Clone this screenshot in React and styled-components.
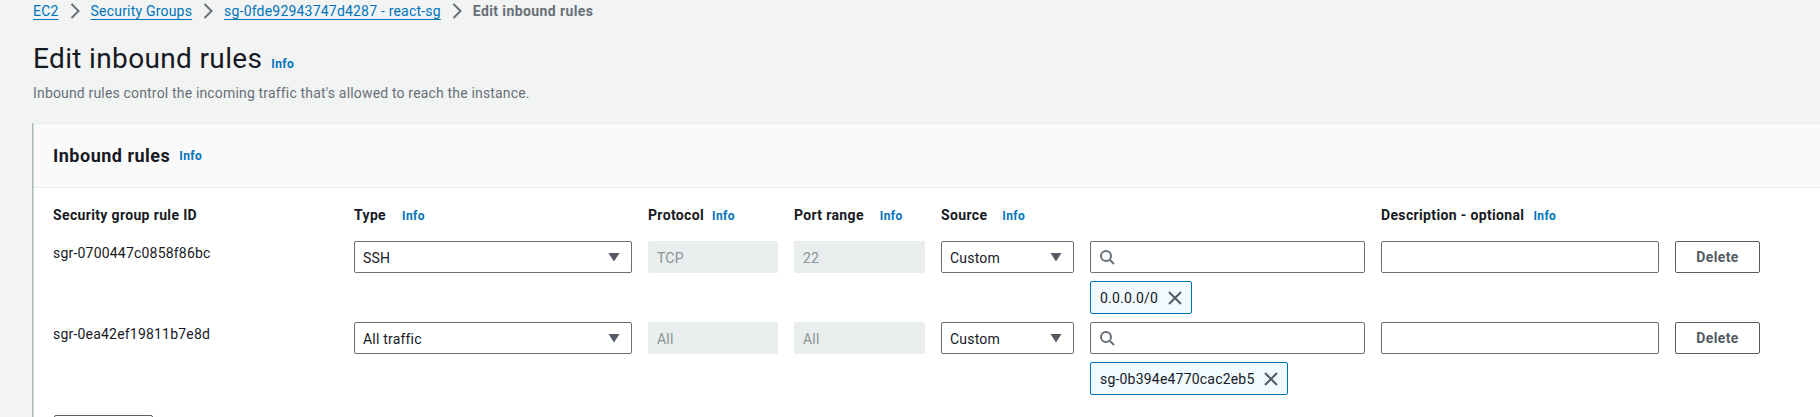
import React from 'react';
import styled, { createGlobalStyle } from 'styled-components';

const GlobalStyle = createGlobalStyle`
  html, body {
    margin: 0;
    height: 417px;
    overflow: hidden;
    background: #f2f3f3;
    font-family: Roboto, "Noto Sans", sans-serif;
    letter-spacing: 0.2px;
    color: #16191f;
  }
`

const Page = styled.div`
  padding: 0 0 0 33px;
`
const Crumbs = styled.nav`
  display: flex;
  align-items: center;
  height: 21px;
  font-size: 14px;
`
const CrumbLink = styled.a`
  color: #0073bb;
  text-decoration: underline;
  text-underline-offset: 3px;
`
const CrumbCurrent = styled.span`
  color: #687078;
  font-weight: 700;
  letter-spacing: 0.4px;
`
const Chevron = styled.svg`
  width: 16px;
  height: 16px;
  margin: 0 8px;
  fill: none;
  stroke: #687078;
  stroke-width: 2;
`
const TitleRow = styled.div`
  display: flex;
  align-items: baseline;
  gap: 9px;
  margin-top: 20px;
`
const Title = styled.h1`
  margin: 0;
  font-size: 28px;
  line-height: 36px;
  font-weight: 400;
  letter-spacing: 0.35px;
`
const Info = styled.a`
  color: #0073bb;
  font-size: 12px;
  font-weight: 700;
  letter-spacing: 0.4px;
  margin-left: ${p => p.$gap || 0}px;
`
const Sub = styled.p`
  margin: 6px 0 0;
  font-size: 14px;
  line-height: 20px;
  letter-spacing: 0.17px;
  color: #687078;
`
const Card = styled.section`
  margin-top: 20px;
  background: #fff;
  border-left: 1px solid #d5dbdb;
  box-shadow: -1px 0 0 #aab7b8;
  height: 294px;
  overflow: hidden;
`
const CardHead = styled.header`
  display: flex;
  align-items: center;
  gap: 9px;
  height: 63px;
  padding-left: 19px;
  background: #fafafa;
  border-top: 1px solid #eaeded;
  border-bottom: 1px solid #eaeded;
`
const CardTitle = styled.h2`
  margin: 0;
  font-size: 18px;
  font-weight: 700;
  letter-spacing: 0.5px;
`
const Rules = styled.div`
  display: grid;
  grid-template-columns: 285px 278px 130px 131px 133px 275px 278px 85px;
  column-gap: 16px;
  row-gap: 8px;
  padding: 17px 0 0 19px;
  align-items: start;
`
const Label = styled.div`
  display: flex;
  align-items: baseline;
  height: 20px;
  margin-bottom: 8px;
  font-size: 14px;
  font-weight: 700;
  letter-spacing: 0.35px;
  white-space: nowrap;
  line-height: 20px;
`
const RuleId = styled.div`
  font-size: 14px;
  line-height: 24px;
`
const Box = styled.div`
  box-sizing: border-box;
  display: flex;
  align-items: center;
  height: 32px;
  padding: 1px 8px 0;
  font-size: 14px;
  background: #fff;
  border: 1px solid #687078;
  border-radius: 2px;
`
const Select = styled(Box)`
  justify-content: space-between;
  padding-right: 9px;
`
const Caret = styled.svg`
  width: 16px;
  height: 16px;
  margin-top: -1px;
  fill: #545b64;
`
const ReadOnly = styled(Box)`
  background: #eaeded;
  border-color: #eaeded;
  color: #879596;
`
const SearchIcon = styled.svg`
  width: 16px;
  height: 16px;
  margin-top: -1px;
  fill: none;
  stroke: #687078;
  stroke-width: 2;
`
const Tag = styled.div`
  box-sizing: border-box;
  display: inline-flex;
  align-items: center;
  gap: 9px;
  height: 33px;
  margin-top: 8px;
  padding: 0 8px 0 9px;
  font-size: 14px;
  background: #f1faff;
  border: 1px solid #0073bb;
  border-radius: 2px;
`
const CloseIcon = styled.svg`
  width: 16px;
  height: 16px;
  fill: none;
  stroke: #545b64;
  stroke-width: 2;
`
const Delete = styled.button`
  box-sizing: border-box;
  height: 32px;
  padding: 0;
  font-family: inherit;
  font-size: 14px;
  font-weight: 700;
  letter-spacing: 0.4px;
  color: #545b64;
  background: #fff;
  border: 1px solid #545b64;
  border-radius: 2px;
`
const AddRule = styled.button`
  display: block;
  box-sizing: border-box;
  width: 99px;
  height: 32px;
  margin: 20px 0 0 20px;
  background: #fff;
  border: 1px solid #545b64;
  border-radius: 2px;
`

const Sep = () => (
  <Chevron viewBox="0 0 16 16"><path d="M4.5 1l7 7-7 7" /></Chevron>
)

const Row = ({ id, type, protocol, port, tag }) => (
  <>
    <RuleId>{id}</RuleId>
    <Select>{type}<Caret viewBox="0 0 16 16"><path d="M2.5 4h11L8 12.5z" /></Caret></Select>
    <ReadOnly>{protocol}</ReadOnly>
    <ReadOnly>{port}</ReadOnly>
    <Select>Custom<Caret viewBox="0 0 16 16"><path d="M2.5 4h11L8 12.5z" /></Caret></Select>
    <div>
      <Box>
        <SearchIcon viewBox="0 0 16 16"><circle cx="7" cy="7" r="5" /><path d="M11 11l4 4" /></SearchIcon>
      </Box>
      <Tag>
        {tag}
        <CloseIcon viewBox="0 0 16 16"><path d="M2 2l12 12M14 2L2 14" /></CloseIcon>
      </Tag>
    </div>
    <Box />
    <Delete>Delete</Delete>
  </>
)

export default function App() {
  return (
    <>
      <GlobalStyle />
      <Page>
        <Crumbs>
          <CrumbLink>EC2</CrumbLink><Sep />
          <CrumbLink>Security Groups</CrumbLink><Sep />
          <CrumbLink>sg-0fde92943747d4287 - react-sg</CrumbLink><Sep />
          <CrumbCurrent>Edit inbound rules</CrumbCurrent>
        </Crumbs>
        <TitleRow>
          <Title>Edit inbound rules</Title>
          <Info>Info</Info>
        </TitleRow>
        <Sub>Inbound rules control the incoming traffic that's allowed to reach the instance.</Sub>
        <Card>
          <CardHead>
            <CardTitle>Inbound rules</CardTitle>
            <Info>Info</Info>
          </CardHead>
          <Rules>
            <Label>Security group rule ID</Label>
            <Label>Type<Info $gap={16}>Info</Info></Label>
            <Label>Protocol<Info $gap={8}>Info</Info></Label>
            <Label>Port range<Info $gap={16}>Info</Info></Label>
            <Label>Source<Info $gap={15}>Info</Info></Label>
            <Label />
            <Label>Description - optional<Info $gap={9}>Info</Info></Label>
            <Label />
            <Row id="sgr-0700447c0858f86bc" type="SSH" protocol="TCP" port="22" tag="0.0.0.0/0" />
            <Row id="sgr-0ea42ef19811b7e8d" type="All traffic" protocol="All" port="All" tag="sg-0b394e4770cac2eb5" />
          </Rules>
          <AddRule />
        </Card>
      </Page>
    </>
  );
}
